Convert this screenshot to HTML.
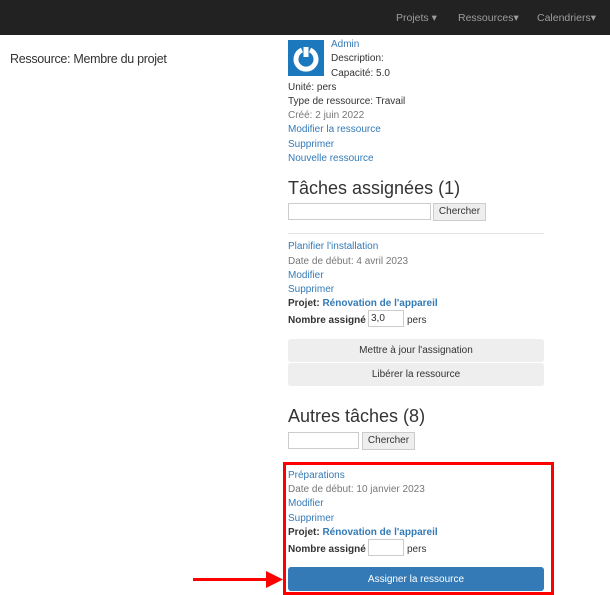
<!DOCTYPE html>
<html><head><meta charset="utf-8"><style>
*{margin:0;padding:0;box-sizing:border-box}
body{width:610px;height:595px;overflow:hidden;background:#fff;font-family:"Liberation Sans",sans-serif;font-size:10px;color:#333;position:relative}
.a{position:absolute;white-space:nowrap;line-height:12px;margin-top:2px}
.l{color:#337ab7}.g{color:#777}
.nav{position:absolute;left:0;top:0;width:610px;height:35px;background:#222}
.nav span{position:absolute;top:12px;color:#9d9d9d;font-size:10.5px}
.in{position:absolute;border:1px solid #ccc;background:#fff;height:17px}
.btn{position:absolute;background:#eee;border:1px solid #ccc;font-size:10px;text-align:center;line-height:16px;color:#333}
.bb{position:absolute;left:288px;width:256px;height:23px;background:#eee;border-radius:3px;text-align:center;font-size:10px;line-height:24px;color:#333}
h2{position:absolute;font-weight:normal;font-size:18px;color:#333;white-space:nowrap}
b{font-weight:bold}
</style></head><body>
<div class="nav"><span style="left:396px">Projets ▾</span><span style="left:458px">Ressources▾</span><span style="left:537px">Calendriers▾</span></div>
<div class="a" style="left:10px;top:51px;font-size:12.5px;letter-spacing:-0.3px">Ressource: Membre du projet</div>
<div style="position:absolute;left:288px;top:40px;width:36px;height:36px;background:#1b78bd">
<svg width="36" height="36" viewBox="0 0 36 36"><path d="M14 10 A10 10 0 1 0 22 10" fill="none" stroke="#fff" stroke-width="5"/><line x1="18" y1="7" x2="18" y2="17" stroke="#fff" stroke-width="5"/></svg></div>
<div class="a l" style="left:331px;top:37px">Admin</div>
<div class="a" style="left:331px;top:51px">Description:</div>
<div class="a" style="left:331px;top:66px">Capacité: 5.0</div>
<div class="a" style="left:288px;top:80px">Unité: pers</div>
<div class="a" style="left:288px;top:94px">Type de ressource: Travail</div>
<div class="a g" style="left:288px;top:108px">Créé: 2 juin 2022</div>
<div class="a l" style="left:288px;top:122px">Modifier la ressource</div>
<div class="a l" style="left:288px;top:137px">Supprimer</div>
<div class="a l" style="left:288px;top:151px">Nouvelle ressource</div>
<h2 style="left:288px;top:178px">Tâches assignées (1)</h2>
<div class="in" style="left:288px;top:203px;width:143px"></div>
<div class="btn" style="left:433px;top:203px;width:53px">Chercher</div>
<div style="position:absolute;left:288px;top:233px;width:256px;border-top:1px solid #e5e5e5"></div>
<div class="a l" style="left:288px;top:239px">Planifier l'installation</div>
<div class="a g" style="left:288px;top:254px">Date de début: 4 avril 2023</div>
<div class="a l" style="left:288px;top:268px">Modifier</div>
<div class="a l" style="left:288px;top:282px">Supprimer</div>
<div class="a" style="left:288px;top:296px"><b>Projet:</b> <b class="l">Rénovation de l'appareil</b></div>
<div class="a" style="left:288px;top:313px"><b>Nombre assigné</b></div>
<div class="in" style="left:368px;top:310px;width:36px;padding-left:2px;line-height:16px">3,0</div>
<div class="a" style="left:407px;top:313px">pers</div>
<div class="bb" style="top:339px">Mettre à jour l'assignation</div>
<div class="bb" style="top:363px">Libérer la ressource</div>
<h2 style="left:288px;top:406px">Autres tâches (8)</h2>
<div class="in" style="left:288px;top:432px;width:71px"></div>
<div class="btn" style="left:362px;top:432px;width:53px">Chercher</div>
<div class="a l" style="left:288px;top:468px">Préparations</div>
<div class="a g" style="left:288px;top:482px">Date de début: 10 janvier 2023</div>
<div class="a l" style="left:288px;top:496px">Modifier</div>
<div class="a l" style="left:288px;top:511px">Supprimer</div>
<div class="a" style="left:288px;top:525px"><b>Projet:</b> <b class="l">Rénovation de l'appareil</b></div>
<div class="a" style="left:288px;top:542px"><b>Nombre assigné</b></div>
<div class="in" style="left:368px;top:539px;width:36px"></div>
<div class="a" style="left:407px;top:542px">pers</div>
<div style="position:absolute;left:288px;top:567px;width:256px;height:24px;background:#337ab7;border-radius:3px;color:#fff;text-align:center;line-height:25px;font-size:10px">Assigner la ressource</div>
<div style="position:absolute;left:283px;top:462px;width:271px;height:133px;border:3px solid #f00"></div>
<div style="position:absolute;left:193px;top:578px;width:78px;height:3px;background:#f00"></div>
<svg style="position:absolute;left:266px;top:571px" width="18" height="17"><polygon points="0,0 17,8.5 0,17" fill="#f00"/></svg>
</body></html>
